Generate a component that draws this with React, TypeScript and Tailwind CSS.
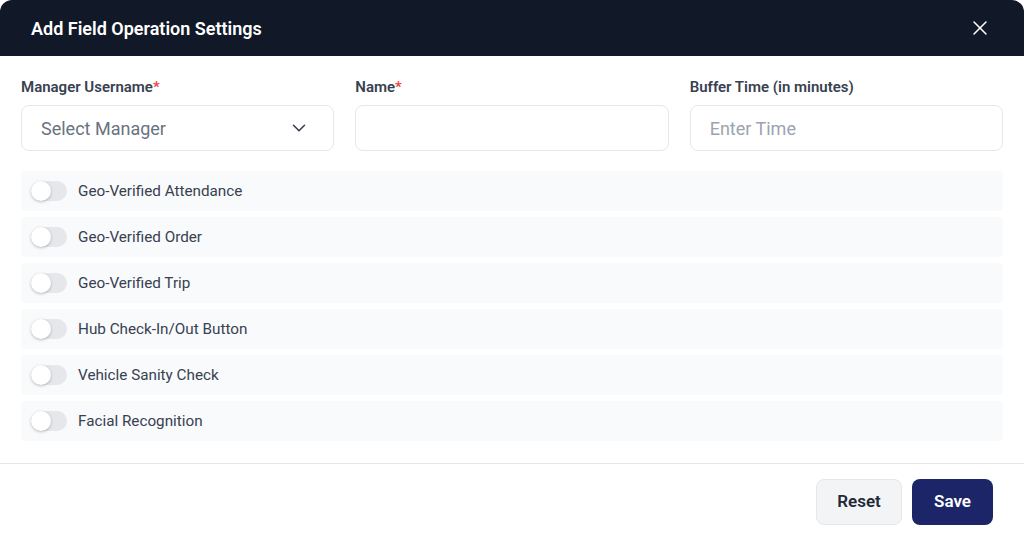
import { useState } from "react"
import { X, ChevronDown } from "lucide-react"

const toggles = [
  "Geo-Verified Attendance",
  "Geo-Verified Order",
  "Geo-Verified Trip",
  "Hub Check-In/Out Button",
  "Vehicle Sanity Check",
  "Facial Recognition",
]

function Toggle({ on, onClick }: { on: boolean; onClick: () => void }) {
  return (
    <button
      onClick={onClick}
      className={`relative h-[20px] w-[36px] shrink-0 rounded-full transition-colors ${on ? "bg-[#1b2567]" : "bg-[#e5e7eb]"}`}
    >
      <span
        className={`absolute top-0 h-[20px] w-[20px] rounded-full bg-white shadow-[0_1px_3px_rgba(0,0,0,0.25)] transition-all ${on ? "left-[16px]" : "left-0"}`}
      />
    </button>
  )
}

export default function App() {
  const [state, setState] = useState<boolean[]>(toggles.map(() => false))

  return (
    <div className="h-[540px] w-[1024px] bg-white font-['Roboto',sans-serif]">
      {/* Header */}
      <div className="flex h-[56px] items-center justify-between rounded-t-[12px] bg-[#111827] pl-[31px] pr-[32px]">
        <h2 className="text-[18px] font-semibold text-white">Add Field Operation Settings</h2>
        <X size={24} strokeWidth={1.5} className="text-white" />
      </div>

      {/* Body */}
      <div className="px-[21px] pt-[22px]">
        <div className="grid grid-cols-3 gap-x-[21px]">
          <div>
            <label className="block text-[15px] font-semibold leading-[18px] text-[#374151]">
              Manager Username<span className="text-[#ef4444]">*</span>
            </label>
            <div className="mt-[9px] flex h-[46px] items-center justify-between rounded-[8px] border border-[#e5e7eb] pl-[19px] pr-[23px]">
              <span className="text-[18px] text-[#6b7280]">Select Manager</span>
              <ChevronDown size={22} strokeWidth={1.75} className="text-[#374151]" />
            </div>
          </div>
          <div>
            <label className="block text-[15px] font-semibold leading-[18px] text-[#374151]">
              Name<span className="text-[#ef4444]">*</span>
            </label>
            <input className="mt-[9px] h-[46px] w-full rounded-[8px] border border-[#e5e7eb] px-[19px] text-[18px] outline-none" />
          </div>
          <div>
            <label className="block text-[15px] font-semibold leading-[18px] text-[#374151]">
              Buffer Time (in minutes)
            </label>
            <input
              placeholder="Enter Time"
              className="mt-[9px] h-[46px] w-full rounded-[8px] border border-[#e5e7eb] px-[19px] text-[18px] outline-none placeholder:text-[#9ca3af]"
            />
          </div>
        </div>

        <div className="mt-[20px] flex flex-col gap-[6px]">
          {toggles.map((t, i) => (
            <div key={t} className="flex h-[40px] items-center gap-[11px] rounded-[4px] bg-[#f9fafb] pl-[10px]">
              <Toggle
                on={state[i]}
                onClick={() => setState((s) => s.map((v, j) => (j === i ? !v : v)))}
              />
              <span className="text-[15.25px] text-[#374151]">{t}</span>
            </div>
          ))}
        </div>
      </div>

      {/* Footer */}
      <div className="mt-[22px] flex justify-end gap-[10px] border-t border-[#e5e7eb] pr-[31px] pt-[15px]">
        <button className="h-[46px] w-[86px] rounded-[8px] border border-[#e5e7eb] bg-[#f3f4f6] text-[17px] font-semibold text-[#1f2937]">
          Reset
        </button>
        <button className="h-[46px] w-[81px] rounded-[8px] bg-[#1b2567] text-[17px] font-semibold text-white">
          Save
        </button>
      </div>
    </div>
  )
}
